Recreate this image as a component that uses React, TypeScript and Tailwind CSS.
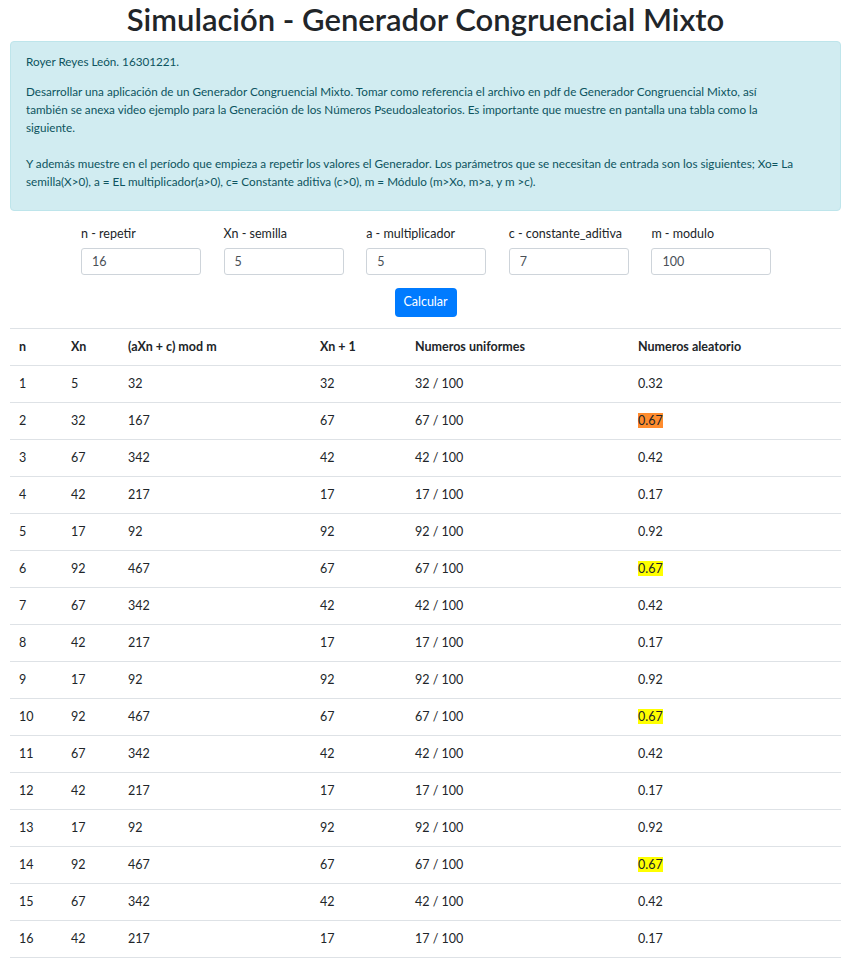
import React from "react";

const FONT = { fontFamily: 'Lato, "Noto Sans", sans-serif' };

const params = [
  { label: "n - repetir", value: "16" },
  { label: "Xn - semilla", value: "5" },
  { label: "a - multiplicador", value: "5" },
  { label: "c - constante_aditiva", value: "7" },
  { label: "m - modulo", value: "100" },
];

interface Row {
  n: number;
  xn: number;
  raw: number;
  next: number;
  r: number;
}

function generate(n: number, x0: number, a: number, c: number, m: number): Row[] {
  const rows: Row[] = [];
  let xn = x0;
  for (let i = 1; i <= n; i++) {
    const raw = a * xn + c;
    const next = raw % m;
    rows.push({ n: i, xn, raw, next, r: next / m });
    xn = next;
  }
  return rows;
}

export default function App() {
  const rows = generate(16, 5, 5, 7, 100);
  const firstRepeat = rows.findIndex((row, i) => rows.slice(i + 1).some((o) => o.next === row.next));
  const repeatValue = firstRepeat >= 0 ? rows[firstRepeat].next : -1;

  return (
    <div className="min-h-screen bg-white px-[10px] text-[#212529]" style={FONT}>
      <h1 className="pt-[1px] text-center text-[31px] font-semibold leading-[37px] text-[#212529]">
        Simulación - Generador Congruencial Mixto
      </h1>

      {/* Enunciado */}
      <div className="mt-[3px] rounded-[4px] border border-[#bee5eb] bg-[#d1ecf1] px-[15px] pt-[10px] pb-[1px] text-[11.7px] leading-[18px] text-[#0c5460]">
        <p className="mb-[12px]">Royer Reyes León. 16301221.</p>
        <p className="mb-[19px]">
          Desarrollar una aplicación de un Generador Congruencial Mixto. Tomar como referencia el archivo en pdf de
          Generador Congruencial Mixto, así
          <br />
          también se anexa video ejemplo para la Generación de los Números Pseudoaleatorios. Es importante que muestre
          en pantalla una tabla como la
          <br />
          siguiente.
          <br />
          <br />Y además muestre en el período que empieza a repetir los valores el Generador. Los parámetros que se
          necesitan de entrada son los siguientes; Xo= La semilla(X&gt;0), a = EL multiplicador(a&gt;0), c= Constante
          aditiva (c&gt;0), m = Módulo (m&gt;Xo, m&gt;a, y m &gt;c).
        </p>
      </div>

      {/* Parametros */}
      <div className="mx-auto mt-[14px] grid w-[713px] grid-cols-5">
        {params.map((p) => (
          <div key={p.label} className="pl-[12px]">
            <label className="block text-[12.5px] leading-[18px] text-[#212529]">{p.label}</label>
            <input
              readOnly
              value={p.value}
              className="mt-[5px] h-[27px] w-[120px] rounded-[3px] border border-[#ced4da] px-[10px] text-[12.5px] text-[#495057] outline-none"
              style={FONT}
            />
          </div>
        ))}
      </div>
      <div className="mt-[13px] flex justify-center">
        <button className="h-[29px] w-[62px] rounded-[4px] bg-[#007bff] text-[12.5px] text-white">Calcular</button>
      </div>

      {/* Tabla */}
      <table className="mt-[11px] w-full table-fixed border-collapse text-left text-[12.5px]">
        <colgroup>
          <col className="w-[52px]" />
          <col className="w-[57px]" />
          <col className="w-[192px]" />
          <col className="w-[95px]" />
          <col className="w-[223px]" />
          <col />
        </colgroup>
        <thead>
          <tr className="h-[37px] border-y border-[#dee2e6] font-bold">
            <th className="px-[9px]">n</th>
            <th className="px-[9px]">Xn</th>
            <th className="px-[9px]">(aXn + c) mod m</th>
            <th className="px-[9px]">Xn + 1</th>
            <th className="px-[9px]">Numeros uniformes</th>
            <th className="px-[9px]">Numeros aleatorio</th>
          </tr>
        </thead>
        <tbody>
          {rows.map((row, i) => {
            const hit = row.next === repeatValue;
            const bg = !hit ? "" : i === firstRepeat ? "bg-[#ff8c2e]" : "bg-[#ffff00]";
            return (
              <tr key={row.n} className="h-[37px] border-b border-[#dee2e6]">
                <td className="px-[9px]">{row.n}</td>
                <td className="px-[9px]">{row.xn}</td>
                <td className="px-[9px]">{row.raw}</td>
                <td className="px-[9px]">{row.next}</td>
                <td className="px-[9px]">{row.next} / 100</td>
                <td className="px-[9px]">
                  <span className={bg}>{row.r.toFixed(2)}</span>
                </td>
              </tr>
            );
          })}
        </tbody>
      </table>
    </div>
  );
}
